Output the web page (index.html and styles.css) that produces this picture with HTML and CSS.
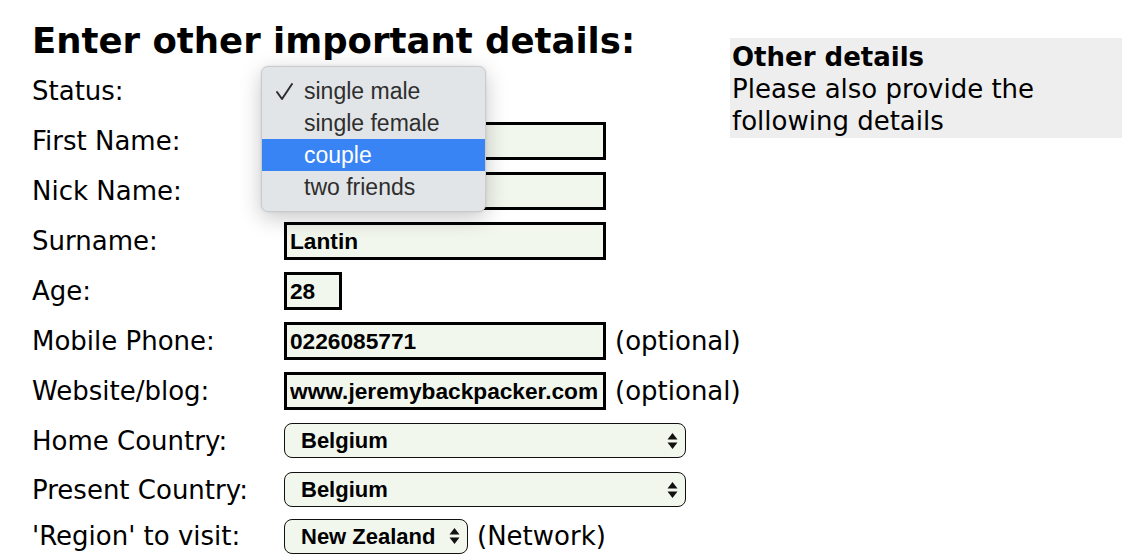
FILE: index.html
```html
<!DOCTYPE html>
<html lang="en">
<head>
<meta charset="utf-8">
<title>Enter other important details</title>
<link rel="stylesheet" href="styles.css">
</head>
<body>
<div class="page">
  <form class="form">
    <h1 class="title">Enter other important details:</h1>
    <div class="rows">
      <div class="row">
        <label class="lbl">Status:</label>
        <div class="field">
          <div class="selwrap status-sel">
            <select class="sel"><option>single male</option></select>
          </div>
          <div class="popup">
            <div class="opt checked">
              <svg class="check" width="20" height="20" viewBox="0 0 20 20"><polyline points="3,10 8,17 18,2" fill="none" stroke="#2e2e2e" stroke-width="2" stroke-linecap="round" stroke-linejoin="round"/></svg>
              single male
            </div>
            <div class="opt">single female</div>
            <div class="opt active">couple</div>
            <div class="opt">two friends</div>
          </div>
        </div>
      </div>
      <div class="row">
        <label class="lbl">First Name:</label>
        <input class="inp wide" type="text" value="">
      </div>
      <div class="row">
        <label class="lbl">Nick Name:</label>
        <input class="inp wide" type="text" value="">
      </div>
      <div class="row">
        <label class="lbl">Surname:</label>
        <input class="inp wide" type="text" value="Lantin">
      </div>
      <div class="row">
        <label class="lbl">Age:</label>
        <input class="inp age" type="text" value="28">
      </div>
      <div class="row">
        <label class="lbl">Mobile Phone:</label>
        <input class="inp wide" type="text" value="0226085771">
        <span class="note">(optional)</span>
      </div>
      <div class="row">
        <label class="lbl">Website/blog:</label>
        <input class="inp wide" type="text" value="www.jeremybackpacker.com">
        <span class="note">(optional)</span>
      </div>
      <div class="row selrow">
        <label class="lbl">Home Country:</label>
        <div class="selwrap country">
          <select class="sel"><option>Belgium</option></select>
          <svg class="arrows" width="11" height="18" viewBox="0 0 11 18"><path d="M5.5 1 L10.5 7.5 H0.5 Z M5.5 17 L10.5 10.5 H0.5 Z" fill="#111"/></svg>
        </div>
      </div>
      <div class="row selrow">
        <label class="lbl">Present Country:</label>
        <div class="selwrap country">
          <select class="sel"><option>Belgium</option></select>
          <svg class="arrows" width="11" height="18" viewBox="0 0 11 18"><path d="M5.5 1 L10.5 7.5 H0.5 Z M5.5 17 L10.5 10.5 H0.5 Z" fill="#111"/></svg>
        </div>
      </div>
      <div class="row lastrow">
        <label class="lbl">'Region' to visit:</label>
        <div class="selwrap region">
          <select class="sel"><option>New Zealand</option></select>
          <svg class="arrows" width="11" height="18" viewBox="0 0 11 18"><path d="M5.5 1 L10.5 7.5 H0.5 Z M5.5 17 L10.5 10.5 H0.5 Z" fill="#111"/></svg>
        </div>
        <span class="note">(Network)</span>
      </div>
    </div>
  </form>
  <aside class="panel">
    <div class="panel-title">Other details</div>
    <div class="panel-text">Please also provide the following details</div>
  </aside>
</div>
</body>
</html>
```

FILE: styles.css
```css
html, body {
  margin: 0;
  padding: 0;
  background: #fff;
}

body {
  font-family: "DejaVu Sans", Verdana, sans-serif;
  color: #000;
}

.page {
  display: flex;
  align-items: flex-start;
  padding: 21px 0 0 32px;
}

.form {
  width: 698px;
  flex: none;
}

.title {
  margin: 0 0 5px 0;
  font-size: 35.5px;
  line-height: 40px;
  font-weight: bold;
  white-space: nowrap;
}

.rows {
  display: flex;
  flex-direction: column;
}

.row {
  height: 50px;
  display: flex;
  align-items: center;
}

.row.selrow {
  height: 49px;
}

.row.lastrow {
  height: 44px;
}

.lbl {
  width: 252px;
  flex: none;
  font-size: 26px;
  line-height: 32px;
  white-space: nowrap;
}

.field {
  position: relative;
  height: 50px;
  display: flex;
  align-items: center;
}

.inp {
  flex: none;
  box-sizing: border-box;
  height: 38px;
  border: 3px solid #000;
  border-radius: 0;
  background: #f2f7ee;
  padding: 0 3px;
  margin: 0;
  font-family: "Liberation Sans", Arial, sans-serif;
  font-weight: bold;
  font-size: 22.7px;
  color: #000;
  outline: none;
}

.inp.wide {
  width: 322px;
}

.inp.age {
  width: 58px;
}

.note {
  flex: none;
  margin-left: 9px;
  font-size: 26px;
  line-height: 32px;
  white-space: nowrap;
}

.selwrap {
  flex: none;
  position: relative;
  display: flex;
  align-items: center;
}

.sel {
  -webkit-appearance: none;
  appearance: none;
  box-sizing: border-box;
  height: 35px;
  margin: 0;
  border: 1.5px solid #111;
  border-radius: 8px;
  background: #f2f7ee;
  padding: 0 30px 0 16px;
  font-family: "Liberation Sans", Arial, sans-serif;
  font-weight: bold;
  font-size: 22px;
  color: #000;
  outline: none;
}

.country .sel {
  width: 402px;
}

.region .sel {
  width: 184px;
}

.status-sel .sel {
  width: 200px;
}

.arrows {
  position: absolute;
  right: 8px;
  top: 50%;
  margin-top: -9px;
  pointer-events: none;
}

.popup {
  position: absolute;
  left: -23px;
  top: 0;
  width: 225px;
  box-sizing: border-box;
  padding: 8px 0;
  background: #e2e5e7;
  border: 1px solid #c9cbcd;
  border-radius: 7px;
  box-shadow: 0 6px 22px rgba(0, 0, 0, 0.22), 0 0 3px rgba(0, 0, 0, 0.08);
  font-family: "Liberation Sans", Arial, sans-serif;
  font-size: 23px;
  color: #2e2e2e;
  z-index: 5;
}

.opt {
  position: relative;
  height: 32px;
  line-height: 32px;
  padding-left: 42px;
  white-space: nowrap;
}

.opt.active {
  background: #3884f4;
  color: #fff;
}

.check {
  position: absolute;
  left: 12px;
  top: 7px;
}

.panel {
  flex: none;
  width: 392px;
  margin-top: 17px;
  box-sizing: border-box;
  padding: 3px 2px 1px 2px;
  background: #eeeeee;
  font-size: 26px;
  line-height: 32px;
}

.panel-title {
  font-weight: bold;
}
```
